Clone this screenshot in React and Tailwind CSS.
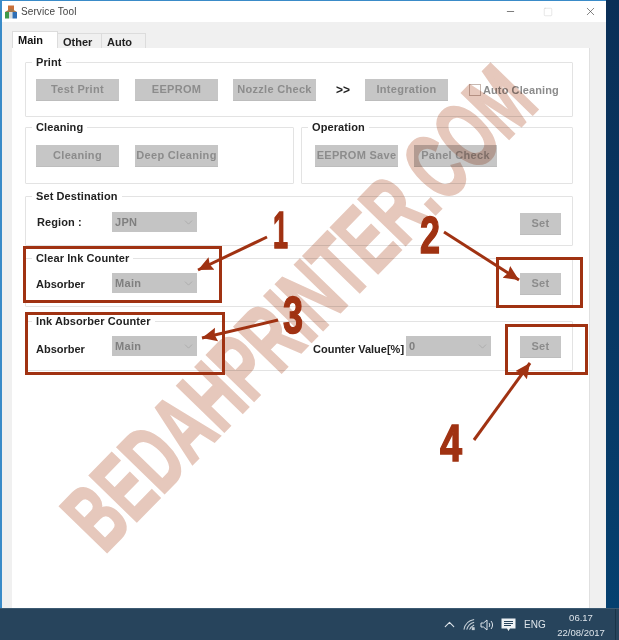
import React from "react";
import { ChevronDown, ChevronUp, Minus, Square, X } from "lucide-react";

const F = "font-['Liberation_Sans',Arial,sans-serif]";

function Btn({ w = "w-[83px]", className = "", children }) {
  return (
    <div className={`${w} h-[22px] shrink-0 bg-[#c6c6c6] border-b border-[#bdbdbd] flex items-center justify-center whitespace-nowrap text-[11px] font-bold tracking-[0.3px] text-[#8c8c8c] ${className}`}>
      {children}
    </div>
  );
}

function Sel({ w = "w-[85px]", children }) {
  return (
    <div className={`${w} h-[20px] shrink-0 bg-[#c4c4c4] flex items-center justify-between pl-[3px] pr-[2px] text-[11px] font-bold tracking-[0.3px] text-[#7f7f7f]`}>
      <span>{children}</span>
      <ChevronDown size={13} strokeWidth={1.2} className="text-[#a0a0a0]" />
    </div>
  );
}

function Group({ title, className = "", children }) {
  return (
    <div className={`relative border border-[#e3e3e3] rounded-[1px] ${className}`}>
      <span className="absolute left-[6px] -top-[8px] bg-white px-[4px] text-[11px] leading-[15px] font-bold tracking-[0.1px] text-[#222]">
        {title}
      </span>
      {children}
    </div>
  );
}

function Tab({ active, w, children }) {
  return active ? (
    <div className={`${w} h-[17px] bg-white border-t border-l border-r border-[#dcdcdc] text-[11px] font-bold text-[#111] pl-[5px] leading-[17px]`}>
      {children}
    </div>
  ) : (
    <div className={`${w} h-[15px] bg-[#f0f0f0] border-t border-r border-[#dcdcdc] text-[11px] font-bold text-[#222] pl-[5px] leading-[17px]`}>
      {children}
    </div>
  );
}

function RedBox({ className }) {
  return <div className={`absolute border-[3px] border-[#a03212] ${className}`} />;
}

export default function App() {
  return (
    <div className={`relative w-[619px] h-[640px] overflow-hidden flex flex-col bg-[#04386a] ${F}`}>
      <div className="flex-1 flex min-h-0">
        {/* window */}
        <div className="w-[606px] flex flex-col border-l-[2px] border-t-[1px] border-[#3a8bc8] bg-white">
          <div className="h-[21px] shrink-0 flex items-center bg-white">
            <svg width="14" height="14" viewBox="0 0 14 14" className="ml-[2px] mt-[1px]">
              <rect x="4" y="0.5" width="6" height="5" fill="#c9703a" />
              <path d="M1 7 L7 3.5 L13 7 Z" fill="#a8784a" />
              <rect x="1" y="7" width="4" height="6.5" fill="#3f9a4a" />
              <rect x="5" y="7" width="3.5" height="6.5" fill="#d8dde0" />
              <rect x="8.5" y="7" width="4.5" height="6.5" fill="#2f6fb5" />
            </svg>
            <span className="ml-[3px] text-[10px] tracking-[0.1px] text-[#444]">Service Tool</span>
            <div className="ml-auto flex items-center">
              <Minus size={11} strokeWidth={1.4} className="text-[#333]" />
              <Square size={10} strokeWidth={1} className="ml-[27px] text-[#c8c8c8]" />
              <X size={13} strokeWidth={1.2} className="ml-[31px] mr-[9px] text-[#444]" />
            </div>
          </div>
          <div className="flex-1 min-h-0 flex flex-col bg-[#f0f0f0] pl-[10px] pr-[16px] pt-[10px]">
            <div className="flex items-end h-[16px] shrink-0">
              <Tab active w="w-[46px]">Main</Tab>
              <Tab w="w-[44px]">Other</Tab>
              <Tab w="w-[44px]">Auto</Tab>
            </div>
            <div className="flex-1 bg-white border-r border-[#e0e0e0] pl-[13px] pr-[16px] pt-[14px] flex flex-col">
              <Group title="Print" className="h-[55px] flex items-start pt-[16px] pl-[10px]">
                <Btn>Test Print</Btn>
                <Btn className="ml-[16px]">EEPROM</Btn>
                <Btn className="ml-[15px]">Nozzle Check</Btn>
                <span className="ml-[20px] w-[13px] text-[12px] font-bold text-[#222] leading-[22px]">&gt;&gt;</span>
                <Btn className="ml-[16px]">Integration</Btn>
                <div className="ml-[21px] mt-[5px] w-[12px] h-[12px] border border-[#c8b8b0]" />
                <span className="ml-[2px] text-[11px] font-bold tracking-[0.1px] text-[#8c8c8c] leading-[22px]">Auto Cleaning</span>
              </Group>
              <div className="flex gap-[7px] mt-[10px]">
                <Group title="Cleaning" className="w-[269px] h-[57px] flex items-start pt-[17px] pl-[10px]">
                  <Btn>Cleaning</Btn>
                  <Btn className="ml-[16px]">Deep Cleaning</Btn>
                </Group>
                <Group title="Operation" className="flex-1 h-[57px] flex items-start pt-[17px] pl-[13px]">
                  <Btn>EEPROM Save</Btn>
                  <Btn className="ml-[16px]">Panel Check</Btn>
                </Group>
              </div>
              <Group title="Set Destination" className="mt-[12px] h-[50px] flex items-start pt-[15px] pl-[11px] pr-[11px]">
                <span className="w-[75px] text-[11px] font-bold tracking-[0.1px] text-[#222] leading-[20px]">Region :</span>
                <Sel>JPN</Sel>
                <Btn w="w-[41px]" className="ml-auto mt-[1px]">Set</Btn>
              </Group>
              <Group title="Clear Ink Counter" className="mt-[12px] h-[49px] flex items-start pt-[14px] pl-[10px] pr-[11px]">
                <span className="w-[76px] text-[11px] font-bold text-[#222] leading-[22px]">Absorber</span>
                <Sel>Main</Sel>
                <Btn w="w-[41px]" className="ml-auto">Set</Btn>
              </Group>
              <Group title="Ink Absorber Counter" className="mt-[14px] h-[50px] flex items-start pt-[14px] pl-[10px] pr-[11px]">
                <span className="w-[76px] mt-[2px] text-[11px] font-bold text-[#222] leading-[22px]">Absorber</span>
                <Sel>Main</Sel>
                <span className="ml-[116px] w-[93px] mt-[2px] text-[11px] font-bold whitespace-nowrap text-[#222] leading-[22px]">Counter Value[%]</span>
                <Sel>0</Sel>
                <Btn w="w-[41px]" className="ml-auto">Set</Btn>
              </Group>
            </div>
          </div>
        </div>
        <div className="flex-1 bg-gradient-to-b from-[#0a2f57] to-[#05406f]" />
      </div>

      {/* taskbar */}
      <div className="h-[32px] shrink-0 bg-[#27445c] border-t border-[#3c5a72] flex items-center text-[#dde4ea]">
        <ChevronUp size={17} strokeWidth={1.6} className="ml-[441px]" />
        <svg width="13" height="13" viewBox="0 0 14 13" className="ml-[5px] text-[#c4ced6]" fill="none" stroke="currentColor" strokeWidth="1.1">
          <path d="M1 12 C2 6 6 2 12 1" /><path d="M4 12 C5 8 8 5 12 4" /><path d="M7 12 C8 10 10 8 12 7" /><rect x="10" y="10" width="2" height="2" fill="currentColor" />
        </svg>
        <svg width="15" height="14" viewBox="0 0 15 14" className="ml-[4px]" fill="none" stroke="currentColor" strokeWidth="1">
          <path d="M1 5 H3.5 L7 2 V12 L3.5 9 H1 Z" /><path d="M9 5 C10 6 10 8 9 9" /><path d="M11 3 C13 5.5 13 8.5 11 11" />
        </svg>
        <svg width="15" height="14" viewBox="0 0 15 14" className="ml-[6px]">
          <path d="M0.5 0.5 H14.5 V10.5 H9 L7.5 13 L6 10.5 H0.5 Z" fill="#eef2f5" />
          <path d="M3 3.5 H12 M3 5.5 H12 M3 7.5 H10" stroke="#27445c" strokeWidth="1" />
        </svg>
        <span className="ml-[8px] w-[20px] whitespace-nowrap text-[10px]">ENG</span>
        <div className="ml-[13px] w-[48px] flex flex-col items-center whitespace-nowrap text-[9.5px] leading-[15px]">
          <span>06.17</span>
          <span>22/08/2017</span>
        </div>
        <div className="ml-[10px] w-px h-full bg-[#1a3448]" />
      </div>

      {/* watermark, over everything in the window */}
      <svg width="619" height="640" className="absolute inset-0 pointer-events-none mix-blend-multiply">
        <text x="104" y="555" transform="rotate(-45.8 104 555)" fontFamily="Liberation Sans, Arial, sans-serif" fontWeight="700" fontSize="95" fill="#e6c8bc" stroke="#e6c8bc" strokeWidth="2.5" textLength="626" lengthAdjust="spacingAndGlyphs">BEDAHPRINTER.COM</text>
      </svg>

      {/* red annotation frames */}
      <RedBox className="left-[23px] top-[246px] w-[199px] h-[57px]" />
      <RedBox className="left-[25px] top-[312px] w-[200px] h-[63px]" />
      <RedBox className="left-[496px] top-[257px] w-[87px] h-[51px]" />
      <RedBox className="left-[505px] top-[324px] w-[83px] h-[51px]" />

      {/* annotation arrows and numbers */}
      <svg width="619" height="640" className="absolute inset-0 pointer-events-none">
        <defs>
          <marker id="h" markerUnits="userSpaceOnUse" markerWidth="18" markerHeight="16" refX="15" refY="7" orient="auto">
            <path d="M0 0 L15 7 L0 14 L2 7 Z" fill="#a03212" />
          </marker>
        </defs>
        <g stroke="#a03212" strokeWidth="3" fill="none">
          <line x1="267" y1="237" x2="198" y2="270" markerEnd="url(#h)" />
          <line x1="278" y1="320" x2="202" y2="338" markerEnd="url(#h)" />
          <line x1="444" y1="232" x2="519" y2="280" markerEnd="url(#h)" />
          <line x1="474" y1="440" x2="530" y2="363" markerEnd="url(#h)" />
        </g>
        <g fontFamily="Liberation Sans, Arial, sans-serif" fontWeight="700" fontSize="52" fill="#a03212" stroke="#a03212" strokeWidth="1.5">
          <text x="273" y="248" textLength="15" lengthAdjust="spacingAndGlyphs">1</text>
          <text x="420" y="253" textLength="20" lengthAdjust="spacingAndGlyphs">2</text>
          <text x="283" y="333" textLength="20" lengthAdjust="spacingAndGlyphs">3</text>
          <text x="440" y="461" textLength="22" lengthAdjust="spacingAndGlyphs">4</text>
        </g>
      </svg>
    </div>
  );
}
